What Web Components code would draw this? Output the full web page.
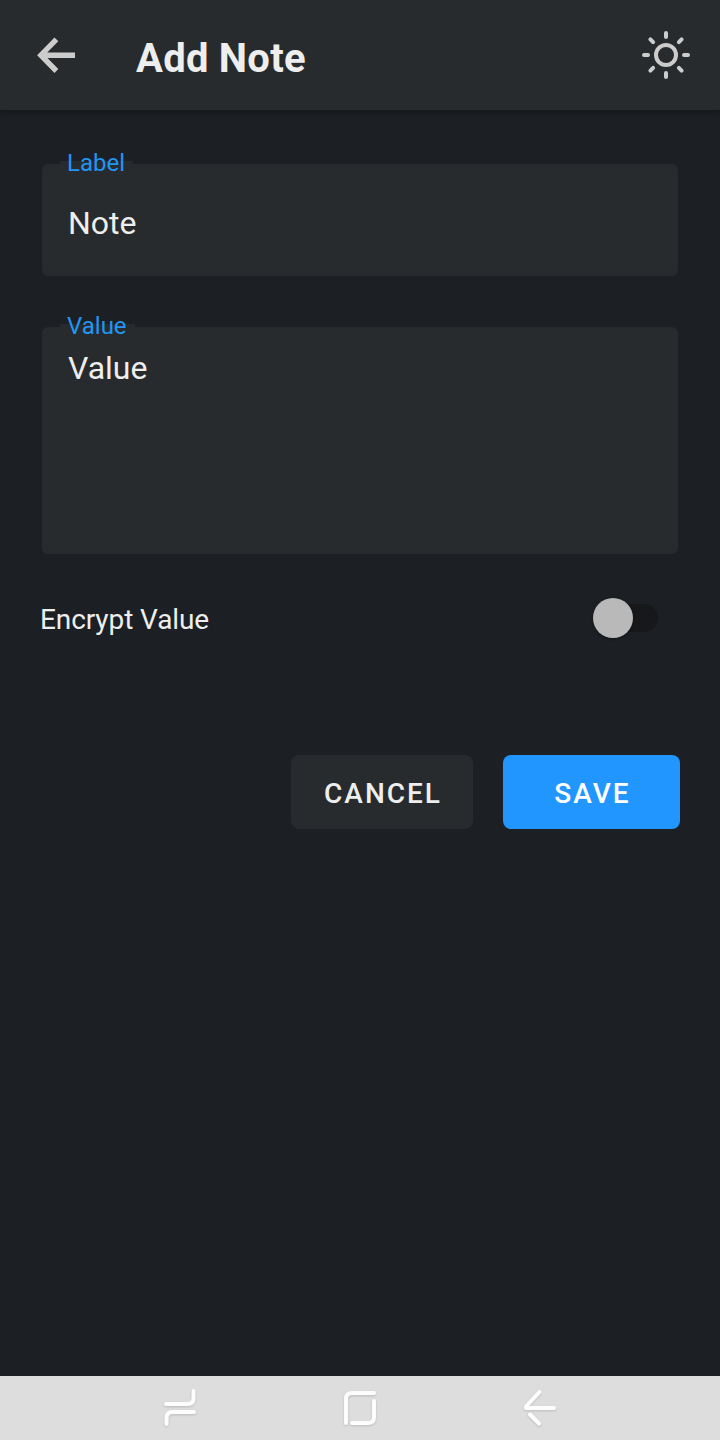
<!DOCTYPE html>
<html lang="en">
<head>
<meta charset="utf-8">
<title>Add Note</title>
<style>
html,body{margin:0;height:100%;background:#1c1f23}
body{font-family:Roboto,"Noto Sans",sans-serif;color:#eee}
</style>
</head>
<body>
<note-screen></note-screen>
<script>
const define = (name, html) => customElements.define(name, class extends HTMLElement {
  constructor() {
    super();
    const t = document.createElement('template');
    t.innerHTML = html;
    this.attachShadow({mode: 'open'}).append(t.content.cloneNode(true));
  }
});

define('app-bar', `
<style>
:host{display:flex;align-items:center;height:110px;box-sizing:border-box;background:#272b2d;padding:0 30px 0 36px;position:relative;box-shadow:0 2px 6px rgba(0,0,0,.3)}
svg{display:block;flex:none}
h1{margin:0;flex:1;padding:7px 0 0 60px;font-size:40px;line-height:46px;font-weight:700;letter-spacing:.25px;color:#eee}
</style>
<svg width="40" height="40" viewBox="0 0 40 40" fill="none" stroke="#ccc" stroke-width="5.4"><path d="M39 20.2H6M20.4 4.4L4.9 20.2L20.4 36"/></svg>
<h1><slot></slot></h1>
<svg width="48" height="48" viewBox="0 0 48 48" fill="none" stroke="#ccc" stroke-width="4" stroke-linecap="round"><circle cx="24" cy="24" r="10"/><path d="M24 2V6M24 42V46M2 24H6M42 24H46M8.400 8.400L11.100 11.100M36.900 36.900L39.600 39.600M39.600 8.400L36.900 11.100M11.100 36.900L8.400 39.600"/></svg>`);

define('text-field', `
<style>
:host{display:block;position:relative;box-sizing:border-box;height:var(--height,112px);background:#272b2d;border-radius:6px;padding:var(--top,41px) 26px 0;font-size:32px;line-height:36px;color:#eee}
label{position:absolute;left:18px;top:-3px;height:10px;padding:0 8px 0 7px;background:#272b2d;font-size:24px;line-height:4px;color:#2196f3}
</style>
<label><slot name="label"></slot></label><slot></slot>`);

define('toggle-switch', `
<style>
:host{display:flex;align-items:center;width:65px;height:40px}
.track{width:58px;height:28px;margin-left:7px;border-radius:14px;background:#17181a;display:flex;align-items:center}
.thumb{flex:none;width:40px;height:40px;margin-left:-7px;border-radius:50%;background:#b9b9b9;box-shadow:0 1px 3px rgba(0,0,0,.3)}
</style><div class="track"><div class="thumb"></div></div>`);

define('setting-row', `
<style>
:host{display:flex;justify-content:space-between;align-items:center;height:40px;padding:0 22px 0 0;font-size:28px;line-height:32px}
span{padding-top:3px;letter-spacing:-.1px}
</style><span><slot></slot></span><slot name="control"></slot>`);

define('action-button', `
<style>
:host{display:flex;box-sizing:border-box;align-items:center;justify-content:center;width:182px;height:74px;border-radius:8px;background:#272b2d;color:#eee;font-size:28px;font-weight:500;letter-spacing:2px;padding:3px 0 0 2px}
:host([primary]){width:177px;background:#2196ff;color:#fff}
</style><slot></slot>`);

define('system-nav', `
<style>
:host{display:flex;height:64px;background:#ddd;padding:0 90px}
svg{flex:1;height:64px;min-width:0;fill:none;stroke:#fdfdfd;stroke-width:4;stroke-linecap:round;stroke-linejoin:round;filter:drop-shadow(0 1px 1px rgba(0,0,0,.15))}
</style>
<svg viewBox="0 0 180 64"><path d="M76 28H97.500Q103.500 28 103.500 22V15M104 36H82.500Q76.500 36 76.500 42V48"/></svg>
<svg viewBox="0 0 180 64"><path d="M76 47V23Q76 17 82 17H104M104 25V41Q104 47 98 47H82"/></svg>
<svg viewBox="0 0 180 64"><path d="M104 32H76V30.500L89.500 16M80 38.500L89 47.500"/></svg>`);

define('note-screen', `
<style>
:host{display:flex;flex-direction:column;height:1440px;width:720px;background:#1c1f23}
main{flex:1;display:flex;flex-direction:column;padding:54px 40px 0}
text-field{margin:0 2px 51px;flex:none}
.area{--height:227px;--top:23px;margin-bottom:44px}
.actions{display:flex;justify-content:flex-end;gap:30px;margin-top:117px}
</style>
<app-bar>Add Note</app-bar>
<main>
<text-field><span slot="label">Label</span>Note</text-field>
<text-field class="area"><span slot="label">Value</span>Value</text-field>
<setting-row>Encrypt Value<toggle-switch slot="control"></toggle-switch></setting-row>
<div class="actions"><action-button>CANCEL</action-button><action-button primary>SAVE</action-button></div>
</main>
<system-nav></system-nav>`);
</script>
</body>
</html>
